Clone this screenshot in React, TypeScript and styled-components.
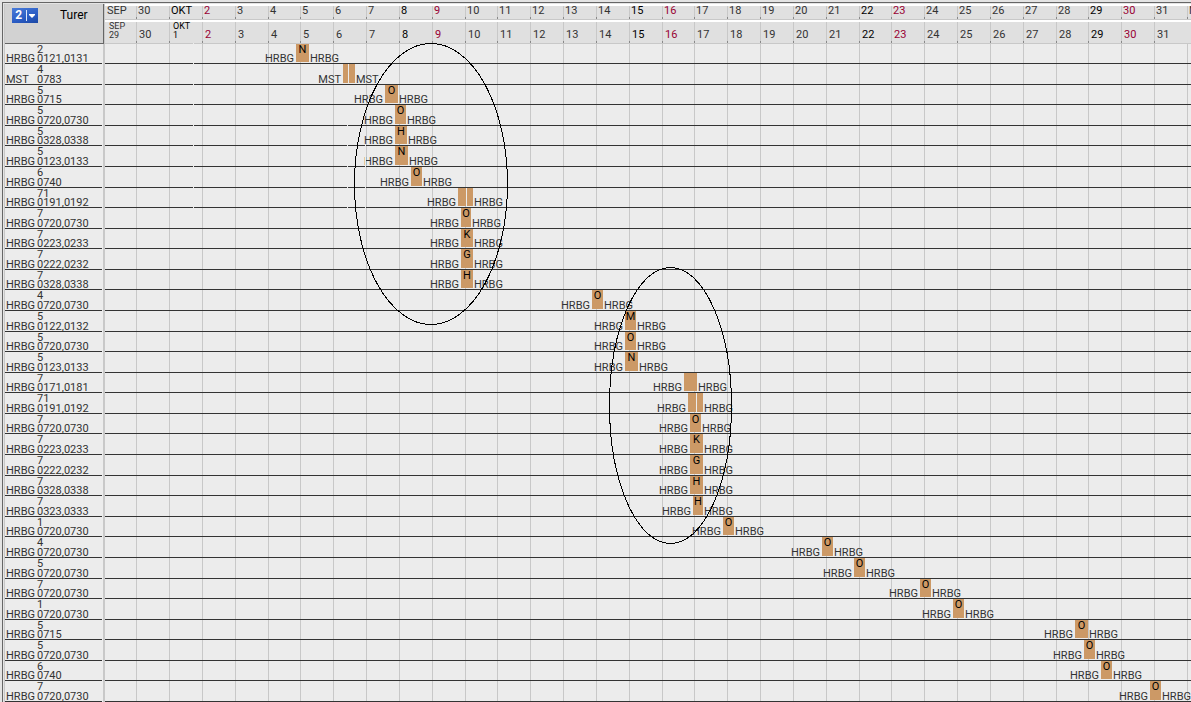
import React from "react";
import styled, { createGlobalStyle } from "styled-components";

/* The time axis is measured in ticks of about 44 minutes; all positions are shares of it. */
const AXIS_TICKS = 1086;
const FIRST_MIDNIGHT = 31.65;
const TICKS_PER_DAY = 32.839;

const share = (ticks: number) => `${(ticks / AXIS_TICKS) * 100}%`;

type Tone = "normal" | "strong" | "holiday";

interface Day {
  start: number;
  length: number;
  month: string;
  label: string;
  tone: Tone;
}

const toneOf = (label: string): Tone => {
  if (["2", "9", "16", "23", "30"].includes(label)) return "holiday";
  if (["1", "8", "15", "22", "29"].includes(label)) return "strong";
  return "normal";
};

const days: Day[] = Array.from({ length: 34 }, (_, i) => {
  const start = i === 0 ? 0 : Math.floor(FIRST_MIDNIGHT + TICKS_PER_DAY * (i - 1));
  const end = i === 33 ? AXIS_TICKS : Math.floor(FIRST_MIDNIGHT + TICKS_PER_DAY * i);
  const date = i === 0 ? 29 : i === 1 ? 30 : i - 1;
  const label = i === 33 ? "1" : String(date);
  const month = i === 0 ? "SEP" : i === 2 ? "OKT" : i === 33 ? "NOV" : "";
  return {
    start,
    length: end - start,
    month,
    label,
    tone: i < 2 || i === 33 ? "normal" : toneOf(label),
  };
});

interface Tour {
  day: string;
  codes: string;
  start: number;
  length: number;
  letter?: string;
  station?: string;
  split?: number;
}

const tours: Tour[] = [
  { day: "2", codes: "0121,0131", start: 191, length: 13, letter: "N" },
  { day: "4", codes: "0783", start: 238, length: 12, station: "MST", split: 5 },
  { day: "5", codes: "0715", start: 280, length: 13, letter: "O" },
  { day: "5", codes: "0720,0730", start: 290, length: 11, letter: "O" },
  { day: "5", codes: "0328,0338", start: 290, length: 12, letter: "H" },
  { day: "5", codes: "0123,0133", start: 290, length: 13, letter: "N" },
  { day: "6", codes: "0740", start: 306, length: 11, letter: "O" },
  { day: "71", codes: "0191,0192", start: 353, length: 15, split: 8 },
  { day: "7", codes: "0720,0730", start: 356, length: 10, letter: "O" },
  { day: "7", codes: "0223,0233", start: 356, length: 12, letter: "K" },
  { day: "7", codes: "0222,0232", start: 356, length: 12, letter: "G" },
  { day: "7", codes: "0328,0338", start: 356, length: 12, letter: "H" },
  { day: "4", codes: "0720,0730", start: 487, length: 11, letter: "O" },
  { day: "5", codes: "0122,0132", start: 520, length: 11, letter: "M" },
  { day: "5", codes: "0720,0730", start: 520, length: 11, letter: "O" },
  { day: "5", codes: "0123,0133", start: 520, length: 13, letter: "N" },
  { day: "7", codes: "0171,0181", start: 579, length: 13 },
  { day: "71", codes: "0191,0192", start: 583, length: 15, split: 8 },
  { day: "7", codes: "0720,0730", start: 585, length: 11, letter: "O" },
  { day: "7", codes: "0223,0233", start: 585, length: 13, letter: "K" },
  { day: "7", codes: "0222,0232", start: 585, length: 13, letter: "G" },
  { day: "7", codes: "0328,0338", start: 585, length: 13, letter: "H" },
  { day: "7", codes: "0323,0333", start: 588, length: 10, letter: "H" },
  { day: "1", codes: "0720,0730", start: 618, length: 11, letter: "O" },
  { day: "4", codes: "0720,0730", start: 717, length: 11, letter: "O" },
  { day: "5", codes: "0720,0730", start: 749, length: 11, letter: "O" },
  { day: "7", codes: "0720,0730", start: 815, length: 11, letter: "O" },
  { day: "1", codes: "0720,0730", start: 848, length: 11, letter: "O" },
  { day: "5", codes: "0715", start: 970, length: 13, letter: "O" },
  { day: "5", codes: "0720,0730", start: 979, length: 11, letter: "O" },
  { day: "6", codes: "0740", start: 996, length: 11, letter: "O" },
  { day: "7", codes: "0720,0730", start: 1045, length: 11, letter: "O" },
];

/* Rows alternate between two heights so that the lines stay on whole pixels. */
const rowEdge = (n: number) => (n === 0 ? 0 : Math.round(20.58 * n - 0.54));
const isTall = (i: number) => rowEdge(i + 1) - rowEdge(i) === 21;

const line = "#c8c8c8";
const ink = "#333333";
const tones: Record<Tone, string> = { normal: ink, strong: "#000000", holiday: "#990033" };

const GlobalStyle = createGlobalStyle`
  * { box-sizing: border-box; }
  body {
    margin: 0;
    background: #ececec;
    color: ${ink};
    font: 11px/10px Roboto, "Liberation Sans", sans-serif;
  }
`;

const Page = styled.main`
  padding: 2px 0 0 2px;
  background: #e4e4e4;
  overflow: hidden;
`;

const Frame = styled.div`
  padding: 1px 0 0 1px;
  border-top: 1px solid #666666;
  border-left: 1px solid #666666;
`;

const Chart = styled.div`
  position: relative;
  border-left: 1px solid ${line};
  background: #ececec;
`;

const Header = styled.header`
  display: flex;
  height: 40px;
`;

const Corner = styled.div`
  display: flex;
  align-items: flex-start;
  flex: 0 0 99px;
  gap: 22px;
  padding: 4px 0 0 7px;
  border-right: 1px solid #666666;
  border-bottom: 1px solid #666666;
  background: #d2d2d2;
`;

const ViewButton = styled.button`
  display: flex;
  align-items: center;
  justify-content: space-evenly;
  width: 26px;
  height: 15px;
  padding: 0;
  border: 0;
  background: linear-gradient(160deg, #4a7cd8, #2a5cc4 60%, #1c48a4);
  color: #ffffff;
  font: bold 12px/15px Roboto, "Liberation Sans", sans-serif;
`;

const Arrow = styled.svg`
  display: block;
  width: 9px;
  height: 11px;
`;

const Title = styled.h1`
  margin: 0;
  color: #000000;
  font-size: 12px;
  font-weight: 400;
  line-height: 15px;
`;

const Scales = styled.div`
  flex: 1;
  min-width: 0;
  border-left: 1px solid ${line};
`;

const Scale = styled.div`
  display: flex;
  overflow: hidden;
  border-bottom: 1px solid ${line};
  background: #e0e0e0;
`;

const UpperScale = styled(Scale)`
  height: 16px;
`;

const LowerScale = styled(Scale)`
  height: 24px;
  border-top: 2px solid #ffffff;
`;

const DayCell = styled.div<{ $length: number; $tone: Tone }>`
  flex: 0 0 ${(p) => share(p.$length)};
  min-width: 0;
  color: ${(p) => tones[p.$tone]};
  background:
    linear-gradient(#888888, #888888) 0 100% / 1px 2px no-repeat,
    linear-gradient(${line}, ${line}) 0 0 / 1px 100% no-repeat;
  &:first-child {
    background: none;
  }
`;

const UpperDay = styled(DayCell)`
  padding: 2px 0 0 2px;
  box-shadow: inset 0 2px #ffffff;
`;

const LowerDay = styled(DayCell)`
  display: flex;
  flex-direction: column;
  justify-content: flex-end;
  padding: 0 0 3px 3px;
`;

const SmallText = styled.span`
  padding-left: 1px;
  font-size: 9px;
  line-height: 9px;
`;

const Body = styled.div`
  display: flex;
`;

const Labels = styled.ul`
  flex: 0 0 100px;
  margin: 0;
  padding: 0 1px 0 0;
  border-right: 2px solid ${line};
  list-style: none;
  line-height: 8px;
`;

const Label = styled.li<{ $tall: boolean }>`
  display: flex;
  height: ${(p) => (p.$tall ? 21 : 20)}px;
  padding-left: 1px;
  border-bottom: 1px solid ${ink};
`;

const Station = styled.span`
  align-self: flex-end;
  flex: 0 0 31px;
`;

const Numbers = styled.div`
  display: flex;
  flex-direction: column;
  justify-content: space-between;
`;

const DayNumber = styled.span`
  line-height: 11px;
`;

const Timeline = styled.div`
  position: relative;
  flex: 1;
  min-width: 0;
  overflow: hidden;
`;

const GridLines = styled.div`
  position: absolute;
  inset: 0;
  display: flex;
`;

const GridColumn = styled.div<{ $length: number }>`
  flex: 0 0 ${(p) => share(p.$length)};
  min-width: 0;
  border-left: 1px solid ${line};
  &:first-child {
    border-left: 0;
  }
`;

const Rows = styled.ul`
  position: relative;
  margin: 0;
  padding: 0;
  list-style: none;
  line-height: 8px;
`;

const Row = styled.li<{ $tall: boolean }>`
  display: flex;
  align-items: flex-end;
  height: ${(p) => (p.$tall ? 21 : 20)}px;
  border-bottom: 1px solid ${ink};
  white-space: nowrap;
`;

const From = styled.span`
  padding-right: 2px;
  text-align: right;
`;

const To = styled.span`
  padding-left: 1px;
`;

const Bar = styled.div`
  display: flex;
  align-self: stretch;
  justify-content: center;
  flex-shrink: 0;
  margin-bottom: 1px;
  background: #cc9966;
  color: #000000;
  line-height: 11px;
`;

const Split = styled.div`
  width: 1px;
  background: #ececec;
`;

const Marks = styled.svg`
  position: absolute;
  inset: 0;
  width: 100%;
  height: 100%;
  pointer-events: none;
`;

const TourRow = ({ tour, tall }: { tour: Tour; tall: boolean }) => {
  const station = tour.station ?? "HRBG";
  return (
    <Row $tall={tall}>
      <From style={{ width: share(tour.start) }}>{station}</From>
      <Bar
        style={{
          width: share(tour.length),
          justifyContent: tour.split ? "flex-start" : undefined,
          paddingLeft: tour.split,
        }}
      >
        {tour.split ? <Split /> : tour.letter}
      </Bar>
      <To>{station}</To>
    </Row>
  );
};

export default function App() {
  return (
    <Page>
      <GlobalStyle />
      <Frame>
        <Chart>
          <Header>
            <Corner>
              <ViewButton type="button" aria-label="View 2">
                2
                <Arrow viewBox="0 0 9 11" aria-hidden="true">
                  <path d="M0 0h1v11H0z" fill="#dfe8fa" />
                  <path d="M3 4h6v1L6 8L3 5z" fill="#ffffff" />
                </Arrow>
              </ViewButton>
              <Title>Turer</Title>
            </Corner>
            <Scales>
              <UpperScale>
                {days.map((d) => (
                  <UpperDay key={d.start} $length={d.length} $tone={d.tone}>
                    {d.month || d.label}
                  </UpperDay>
                ))}
              </UpperScale>
              <LowerScale>
                {days.slice(0, 33).map((d) => (
                  <LowerDay key={d.start} $length={d.length} $tone={d.tone}>
                    {d.month ? (
                      <>
                        <SmallText>{d.month}</SmallText>
                        <SmallText>{d.label}</SmallText>
                      </>
                    ) : (
                      d.label
                    )}
                  </LowerDay>
                ))}
              </LowerScale>
            </Scales>
          </Header>
          <Body>
            <Labels>
              {tours.map((t, i) => (
                <Label key={i} $tall={isTall(i)}>
                  <Station>{t.station ?? "HRBG"}</Station>
                  <Numbers>
                    <DayNumber>{t.day}</DayNumber>
                    <span>{t.codes}</span>
                  </Numbers>
                </Label>
              ))}
            </Labels>
            <Timeline>
              <GridLines>
                {days.map((d) => (
                  <GridColumn key={d.start} $length={d.length} />
                ))}
              </GridLines>
              <Rows>
                {tours.map((t, i) => (
                  <TourRow key={i} tour={t} tall={isTall(i)} />
                ))}
              </Rows>
            </Timeline>
          </Body>
          <Marks viewBox="5 4 1186 698" preserveAspectRatio="none" aria-hidden="true">
            <g shapeRendering="crispEdges" fill="#ececec">
              <rect x="193" y="43" width="1" height="165" />
              <rect x="347" y="125" width="1" height="83" />
              <rect x="365" y="145" width="1" height="63" />
            </g>
            <g fill="none" stroke="#000000" shapeRendering="crispEdges">
              <ellipse cx="431" cy="184" rx="76.500" ry="140.500" />
              <ellipse cx="670.500" cy="405.500" rx="61" ry="138" />
            </g>
          </Marks>
        </Chart>
      </Frame>
    </Page>
  );
}
